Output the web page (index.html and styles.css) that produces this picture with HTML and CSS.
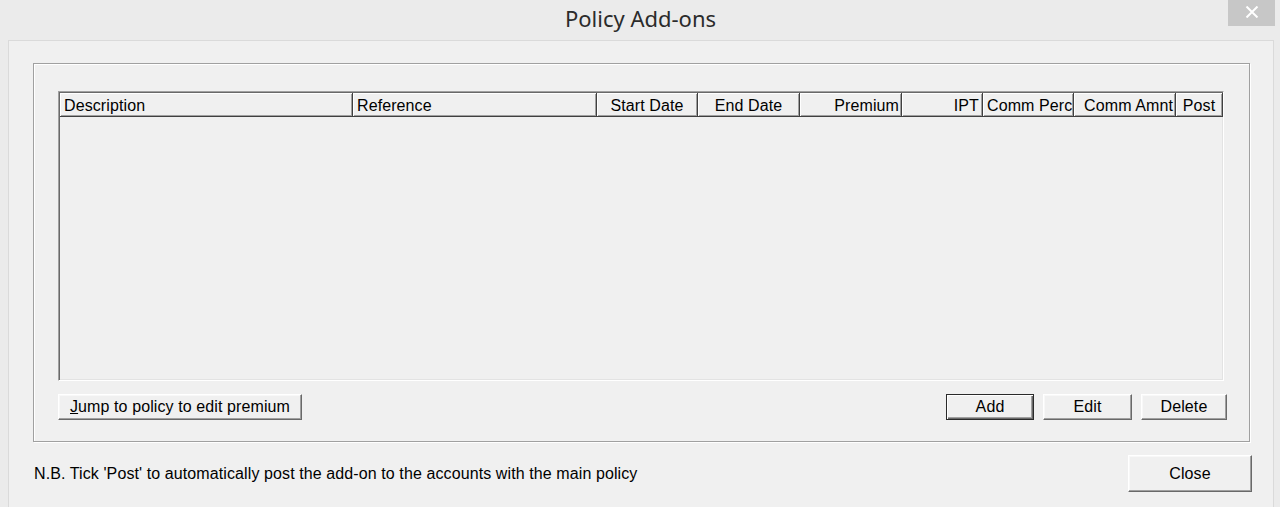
FILE: index.html
```html
<!DOCTYPE html>
<html>
<head>
<meta charset="utf-8">
<link rel="stylesheet" href="styles.css">
</head>
<body>
<div class="titlebar">
  <div class="title">Policy Add-ons</div>
  <div class="close-x" aria-label="Close">
    <svg width="14" height="12" viewBox="0 0 14 12"><path d="M1.5 0.5 L12.5 11.5 M12.5 0.5 L1.5 11.5" stroke="#fff" stroke-width="2" fill="none"/></svg>
  </div>
</div>
<div class="client">
  <div class="group">
    <div class="listview">
      <div class="header">
        <div class="col c-desc left">Description</div>
        <div class="col c-ref left">Reference</div>
        <div class="col c-start center">Start Date</div>
        <div class="col c-end center">End Date</div>
        <div class="col c-prem right">Premium</div>
        <div class="col c-ipt right">IPT</div>
        <div class="col c-cperc left">Comm Perc</div>
        <div class="col c-camnt right">Comm Amnt</div>
        <div class="col c-post center">Post</div>
      </div>
    </div>
    <div class="btnrow">
      <button class="btn btn-jump"><u>J</u>ump to policy to edit premium</button>
      <div class="btngroup">
        <button class="btn btn-add default">Add</button>
        <button class="btn btn-edit">Edit</button>
        <button class="btn btn-del">Delete</button>
      </div>
    </div>
  </div>
  <div class="footer">
    <div class="note">N.B. Tick 'Post' to automatically post the add-on to the accounts with the main policy</div>
    <button class="btn btn-close">Close</button>
  </div>
</div>
</body>
</html>
```
FILE: styles.css
```css
html, body {
  margin: 0;
  padding: 0;
}
body {
  width: 1280px;
  height: 507px;
  overflow: hidden;
  background: #ebebeb;
  font-family: "Liberation Sans", Arial, sans-serif;
  font-size: 16px;
  letter-spacing: 0.1px;
  color: #000;
}
.titlebar {
  height: 40px;
  display: flex;
  align-items: center;
  justify-content: center;
  position: relative;
}
.title {
  font-family: "Noto Sans", "Open Sans", sans-serif;
  font-size: 22px;
  letter-spacing: 0;
  color: #2b2b2b;
  margin-top: -5px;
  margin-left: 1px;
}
.close-x {
  position: absolute;
  left: 1228px;
  top: 0;
  width: 47px;
  height: 26px;
  background: #c7c7c7;
  display: flex;
  align-items: center;
  justify-content: center;
  padding-bottom: 2px;
  box-sizing: border-box;
}
.client {
  margin-left: 8px;
  width: 1266px;
  height: 480px;
  background: #f0f0f0;
  border: 1px solid #dadada;
  border-bottom: none;
  padding: 22px 0 0 24px;
  box-sizing: border-box;
}
.group {
  width: 1217px;
  box-sizing: border-box;
  border: 1px solid #a0a0a0;
  box-shadow: inset 1px 1px 0 #fff, 1px 1px 0 #fff;
  padding: 27px 24px 21px 24px;
}
.listview {
  width: 1166px;
  height: 290px;
  box-sizing: border-box;
  border: 1px solid;
  border-color: #a0a0a0 #fff #fff #a0a0a0;
  box-shadow: inset 1px 1px 0 #696969, inset -1px -1px 0 #e3e3e3;
  padding: 1px;
  background: #f0f0f0;
  overflow: hidden;
}
.header {
  display: flex;
  height: 24px;
}
.col {
  height: 24px;
  box-sizing: border-box;
  flex: none;
  background: #f0f0f0;
  border-right: 1px solid #404040;
  border-bottom: 1px solid #404040;
  box-shadow: inset 1px 1px 0 #fff, inset -1px -1px 0 #a0a0a0;
  line-height: 25px;
  padding: 0 4px;
  white-space: nowrap;
  overflow: hidden;
}
.left { text-align: left; }
.center { text-align: center; }
.right { text-align: right; }
.c-desc { width: 293px; }
.c-ref { width: 244px; }
.c-start { width: 101px; }
.c-end { width: 102px; }
.c-prem { width: 102px; padding-right: 2px; }
.c-ipt { width: 81px; padding-right: 3px; }
.c-cperc { width: 91px; }
.c-camnt { width: 102px; padding-right: 2px; }
.c-post { width: 47px; }
.btnrow {
  display: flex;
  justify-content: space-between;
  margin-top: 13px;
  margin-right: -2px;
  height: 26px;
}
.btngroup {
  display: flex;
  gap: 9px;
}
.btn {
  font-family: "Liberation Sans", Arial, sans-serif;
  font-size: 16px;
  letter-spacing: 0.1px;
  color: #000;
  background: #f0f0f0;
  height: 26px;
  margin: 0;
  padding: 0;
  box-sizing: border-box;
  border: 1px solid;
  border-color: #fff #696969 #696969 #fff;
  box-shadow: inset -1px -1px 0 #a0a0a0, inset 1px 1px 0 #f8f8f8;
  line-height: 22px;
}
.btn-jump { width: 244px; }
.btn-add { width: 88px; }
.btn-edit { width: 89px; }
.btn-del { width: 86px; }
.btn.default {
  border: 1px solid #2a2a2a;
  box-shadow: inset 1px 1px 0 #fff, inset -1px -1px 0 #696969, inset -2px -2px 0 #a0a0a0;
}
.footer {
  width: 1219px;
  display: flex;
  align-items: center;
  justify-content: space-between;
  margin-top: 13px;
  padding-left: 1px;
  box-sizing: border-box;
}
.note {
  white-space: nowrap;
}
.btn-close {
  width: 124px;
  height: 37px;
  line-height: 33px;
}
```
